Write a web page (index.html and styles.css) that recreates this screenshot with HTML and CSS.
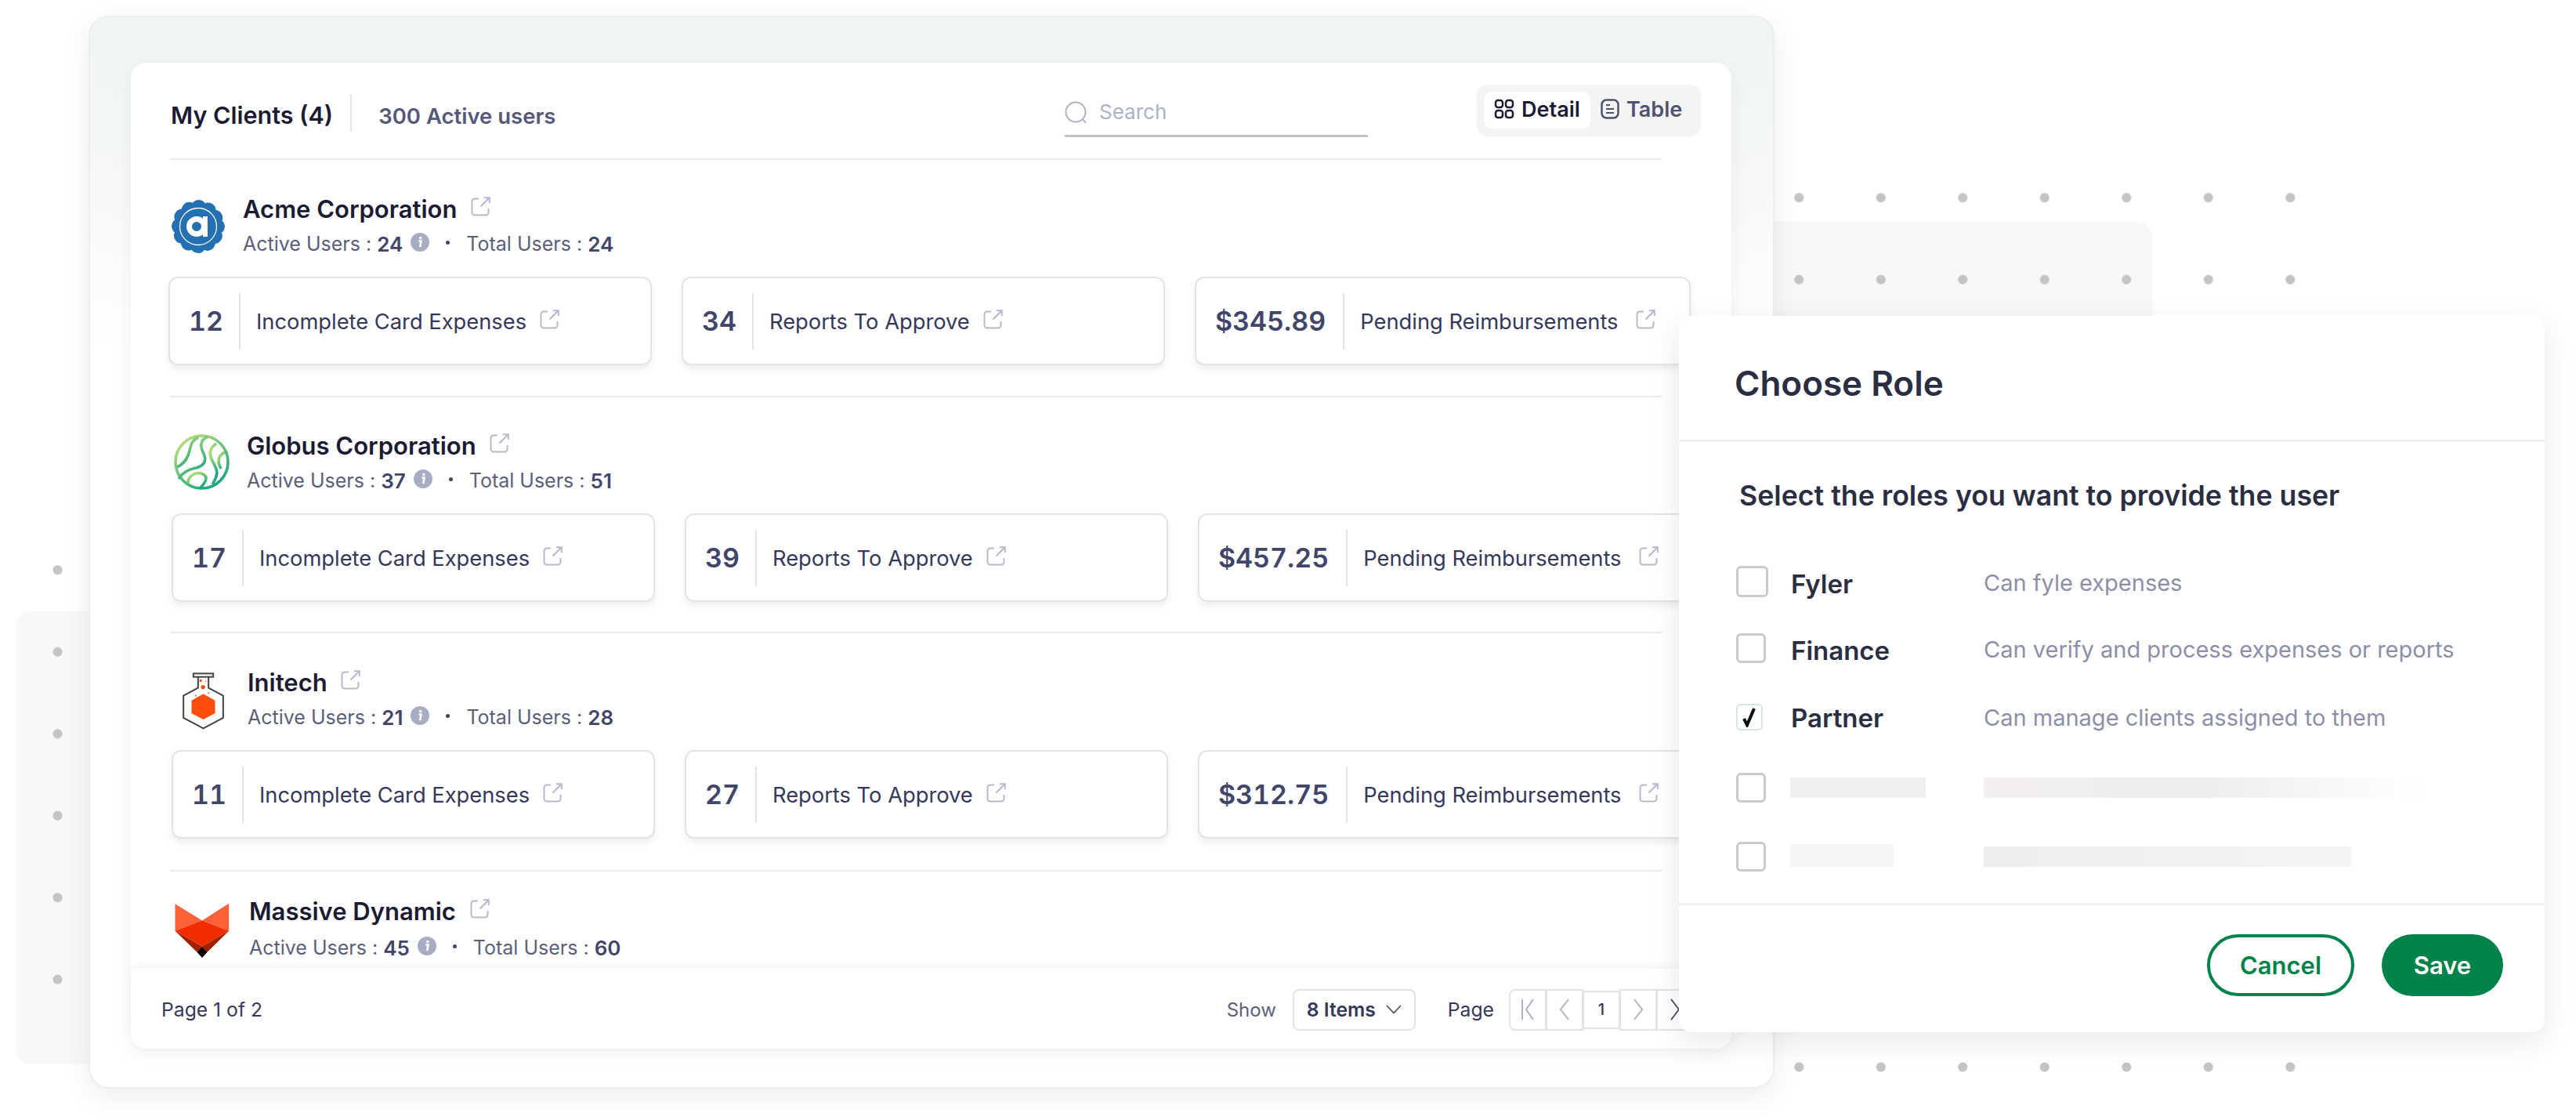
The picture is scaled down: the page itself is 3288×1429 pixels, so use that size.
FILE: index.html
```html
<!DOCTYPE html>
<html lang="en">
<head>
    <meta charset="UTF-8">
    <title>My Clients</title>
    <link rel="stylesheet" href="styles.css">
</head>
<body>
    <svg class="defs" width="0" height="0">
        <symbol id="ext" viewBox="0 0 25 25">
            <path d="M10 2.500H5A3.500 3.500 0 0 0 1.500 6v14A3.500 3.500 0 0 0 5 23.500h14a3.500 3.500 0 0 0 3.500-3.500v-5" fill="none" stroke="#b6b9cd" stroke-width="2"/>
            <path d="M12.500 12.500 23.500 1.500M17 1.200h6.800V8" fill="none" stroke="#b6b9cd" stroke-width="2"/>
        </symbol>
        <symbol id="info" viewBox="0 0 24 24">
            <circle cx="12" cy="12" r="12" fill="#a9adc3"/>
            <circle cx="12.800" cy="6.500" r="1.800" fill="#fff"/>
            <path d="M10.500 10.500h3l-1.300 7.500" fill="none" stroke="#fff" stroke-width="2.600"/>
        </symbol>
        <linearGradient id="globe" x1="0.150" y1="0" x2="0.800" y2="1">
            <stop offset="0" stop-color="#bfdf78"/>
            <stop offset="1" stop-color="#0fa280"/>
        </linearGradient>
    </svg>

    <div class="page">
        <div class="block block-left"></div>
        <div class="block block-right"></div>
        <div class="dots dots-left"></div>
        <div class="dots dots-right"></div>
        <div class="dots dots-bottom"></div>

        <div class="panel">
            <div class="card">
                <div class="card-head">
                    <span class="title">My Clients (4)</span>
                    <span class="subtitle">300 Active users</span>
                    <div class="search">
                        <svg width="30" height="30" viewBox="0 0 30 30"><circle cx="14" cy="14" r="12.500" fill="none" stroke="#aeb1c6" stroke-width="2"/><path d="M23 23l4 5" stroke="#aeb1c6" stroke-width="2"/></svg>
                        <span class="search-text">Search</span>
                    </div>
                    <div class="toggle">
                        <div class="toggle-item active">
                            <svg width="26" height="26" viewBox="0 0 26 26" fill="none" stroke="#1b1b33" stroke-width="2.500"><rect x="2" y="2" width="9" height="9" rx="3"/><rect x="15" y="2" width="9" height="9" rx="3"/><rect x="2" y="15" width="9" height="9" rx="3"/><rect x="15" y="15" width="9" height="9" rx="3"/></svg>
                            <span>Detail</span>
                        </div>
                        <div class="toggle-item">
                            <svg width="24" height="26" viewBox="0 0 24 26" fill="none" stroke="#4f5270" stroke-width="2.500"><rect x="1.500" y="1.500" width="21" height="23" rx="6"/><path d="M7 8h5M7 13h10M7 18h10" stroke-width="2"/></svg>
                            <span>Table</span>
                        </div>
                    </div>
                </div>
                <hr class="rule">

                <div class="list">
                    <div class="client client-acme">
                        <div class="client-head">
                            <div class="logo logo-acme">
                                <svg width="68" height="68" viewBox="0 0 68 68">
                                    <circle cx="34" cy="34" r="24" fill="none" stroke="#2470b3" stroke-width="20" stroke-linecap="round" stroke-dasharray="0.010 12.556"/>
                                    <circle cx="34" cy="34" r="25" fill="#2470b3"/>
                                    <circle cx="34" cy="34" r="23.500" fill="none" stroke="#fff" stroke-width="1.300"/>
                                    <circle cx="32" cy="34" r="9.500" fill="none" stroke="#fff" stroke-width="7"/>
                                    <rect x="40" y="21" width="6" height="26" fill="#fff"/>
                                </svg>
                            </div>
                            <div class="client-text">
                                <div class="client-name">Acme Corporation <svg class="ext ext-name"><use href="#ext"/></svg></div>
                                <div class="client-meta">Active Users : <b>24</b> <svg class="info"><use href="#info"/></svg><i class="sep"></i>Total Users : <b>24</b></div>
                            </div>
                        </div>
                        <div class="tiles">
                            <div class="tile"><div class="tile-num">12</div><span class="tile-label">Incomplete Card Expenses</span><svg class="ext"><use href="#ext"/></svg></div>
                            <div class="tile"><div class="tile-num">34</div><span class="tile-label">Reports To Approve</span><svg class="ext"><use href="#ext"/></svg></div>
                            <div class="tile tile-wide"><div class="tile-num">$345.89</div><span class="tile-label">Pending Reimbursements</span><svg class="ext"><use href="#ext"/></svg></div>
                        </div>
                    </div>
                    <hr class="rule">

                    <div class="client client-globus">
                        <div class="client-head">
                            <div class="logo logo-globus">
                                <svg width="71" height="71" viewBox="0 0 71 71" fill="none" stroke="url(#globe)" stroke-width="3.600">
                                    <g>
                                        <circle cx="35.500" cy="35.500" r="33.500"/>
                                        <path d="M31 4C20 9 22 17 18 27 15 35 10 39 4 42"/>
                                        <path d="M43 3C32 8 34 17 38 25 43 36 36 41 28 43 17 45 10 50 6 57"/>
                                        <path d="M54 12C43 19 46 29 50 36 55 45 58 50 49 64"/>
                                        <path d="M65 23C56 27 55 35 60 44"/>
                                        <path d="M18 63C17 54 27 48 35 50 44 53 42 60 34 68"/>
                                    </g>
                                </svg>
                            </div>
                            <div class="client-text">
                                <div class="client-name">Globus Corporation <svg class="ext ext-name"><use href="#ext"/></svg></div>
                                <div class="client-meta">Active Users : <b>37</b> <svg class="info"><use href="#info"/></svg><i class="sep"></i>Total Users : <b>51</b></div>
                            </div>
                        </div>
                        <div class="tiles">
                            <div class="tile"><div class="tile-num">17</div><span class="tile-label">Incomplete Card Expenses</span><svg class="ext"><use href="#ext"/></svg></div>
                            <div class="tile"><div class="tile-num">39</div><span class="tile-label">Reports To Approve</span><svg class="ext"><use href="#ext"/></svg></div>
                            <div class="tile tile-wide"><div class="tile-num">$457.25</div><span class="tile-label">Pending Reimbursements</span><svg class="ext"><use href="#ext"/></svg></div>
                        </div>
                    </div>
                    <hr class="rule">

                    <div class="client client-initech">
                        <div class="client-head">
                            <div class="logo logo-initech">
                                <svg width="55" height="74" viewBox="90 78 164 222">
                                    <path d="M152 99v41L96 170v85l76 40 76-40v-85l-56-30V99" fill="none" stroke="#444" stroke-width="6"/>
                                    <rect x="134" y="85" width="76" height="13" fill="#fff" stroke="#444" stroke-width="6"/>
                                    <path d="M172 163l45 25v49l-45 24-45-24v-49z" fill="#ff4d0d"/>
                                    <g fill="#ff4d0d"><circle cx="162" cy="112" r="5"/><circle cx="181" cy="115" r="2.500"/><circle cx="171" cy="137" r="8"/><circle cx="143" cy="170" r="3"/><circle cx="192" cy="160" r="3"/></g>
                                </svg>
                            </div>
                            <div class="client-text">
                                <div class="client-name">Initech <svg class="ext ext-name"><use href="#ext"/></svg></div>
                                <div class="client-meta">Active Users : <b>21</b> <svg class="info"><use href="#info"/></svg><i class="sep"></i>Total Users : <b>28</b></div>
                            </div>
                        </div>
                        <div class="tiles">
                            <div class="tile"><div class="tile-num">11</div><span class="tile-label">Incomplete Card Expenses</span><svg class="ext"><use href="#ext"/></svg></div>
                            <div class="tile"><div class="tile-num">27</div><span class="tile-label">Reports To Approve</span><svg class="ext"><use href="#ext"/></svg></div>
                            <div class="tile tile-wide"><div class="tile-num">$312.75</div><span class="tile-label">Pending Reimbursements</span><svg class="ext"><use href="#ext"/></svg></div>
                        </div>
                    </div>
                    <hr class="rule">

                    <div class="client client-massive">
                        <div class="client-head">
                            <div class="logo logo-massive">
                                <svg width="70" height="71" viewBox="70 64 210 214">
                                    <path d="M71 68l104 64-104 40zM278 66l-103 66 103 40z" fill="#ff6038"/>
                                    <path d="M71 172l104-40 103 40-103 60z" fill="#f12c00"/>
                                    <path d="M71 172l104 60-20 21zM278 172l-103 60 20 21z" fill="#a12000"/>
                                    <path d="M175 232l20 21-20 22-20-22z" fill="#000"/>
                                </svg>
                            </div>
                            <div class="client-text">
                                <div class="client-name">Massive Dynamic <svg class="ext ext-name"><use href="#ext"/></svg></div>
                                <div class="client-meta">Active Users : <b>45</b> <svg class="info"><use href="#info"/></svg><i class="sep"></i>Total Users : <b>60</b></div>
                            </div>
                        </div>
                    </div>
                </div>

                <div class="card-foot">
                    <span class="page-count">Page 1 of 2</span>
                    <div class="foot-right">
                        <span class="show">Show</span>
                        <div class="select">
                            <span>8 Items</span>
                            <svg width="20" height="12" viewBox="0 0 20 12" fill="none" stroke="#4f5270" stroke-width="1.800"><path d="M1 1l9 9.500L19 1"/></svg>
                        </div>
                        <span class="page-word">Page</span>
                        <div class="pager">
                            <div class="pager-btn"><svg width="18" height="28" viewBox="0 0 18 28" fill="none" stroke="#aeb1c6" stroke-width="2"><path d="M2 1v26M16 1L7 14l9 13"/></svg></div>
                            <div class="pager-btn"><svg width="14" height="28" viewBox="0 0 14 28" fill="none" stroke="#aeb1c6" stroke-width="2"><path d="M12 1L2 14l10 13"/></svg></div>
                            <div class="pager-btn pager-current">1</div>
                            <div class="pager-btn"><svg width="14" height="28" viewBox="0 0 14 28" fill="none" stroke="#aeb1c6" stroke-width="2"><path d="M2 1l10 13L2 27"/></svg></div>
                            <div class="pager-btn"><svg width="14" height="28" viewBox="0 0 14 28" fill="none" stroke="#4f5270" stroke-width="2"><path d="M2 1l10 13L2 27"/></svg></div>
                        </div>
                    </div>
                </div>
            </div>
        </div>

        <div class="modal">
            <div class="modal-head">Choose Role</div>
            <div class="modal-body">
                <div class="modal-lead">Select the roles you want to provide the user</div>
                <div class="roles">
                    <div class="check check-lg"></div><span class="role-name">Fyler</span><span class="role-desc">Can fyle expenses</span>
                    <div class="check"></div><span class="role-name">Finance</span><span class="role-desc">Can verify and process expenses or reports</span>
                    <div class="check check-on">
                        <svg width="20" height="26" viewBox="0 0 20 26" fill="none" stroke="#111" stroke-width="4"><path d="M3 15l4 8L16 2"/></svg>
                    </div><span class="role-name role-name-up">Partner</span><span class="role-desc">Can manage clients assigned to them</span>
                    <div class="check"></div><div class="skel skel-name-a"></div><div class="skel skel-desc-a"></div>
                    <div class="check"></div><div class="skel skel-name-b"></div><div class="skel skel-desc-b"></div>
                </div>
            </div>
            <div class="modal-foot">
                <div class="btn btn-outline">Cancel</div>
                <div class="btn btn-solid">Save</div>
            </div>
        </div>
    </div>
</body>
</html>
```

FILE: styles.css
```css
* {
    box-sizing: border-box;
}
body {
    margin: 0;
    background: #fff;
    font-family: Inter, "Noto Sans", sans-serif;
    color: #35385a;
}
.defs {
    position: absolute;
}
.page {
    position: relative;
    width: 3288px;
    height: 1429px;
    padding: 20px 0 0 113px;
    overflow: hidden;
}

/* background decoration */
.block {
    position: absolute;
    background: #f7f8fa;
    border-radius: 20px;
}
.block-left {
    left: 20px;
    top: 780px;
    width: 200px;
    height: 578px;
}
.block-right {
    left: 2200px;
    top: 283px;
    width: 547px;
    height: 300px;
}
.dots {
    position: absolute;
    background-image: radial-gradient(circle, #c4c4c4 5.5px, transparent 6.5px);
    background-size: 104.5px 104.5px;
}
.dots-left {
    left: 21px;
    top: 675px;
    width: 104.5px;
    height: 627px;
}
.dots-right {
    left: 2244px;
    top: 200px;
    width: 731.5px;
    height: 209px;
}
.dots-bottom {
    left: 2244px;
    top: 1309px;
    width: 731.5px;
    height: 104.5px;
}

/* main panel */
.panel {
    position: relative;
    width: 2152px;
    height: 1369px;
    padding: 58px 52px 0;
    background: linear-gradient(#f1f4f5 0, #f5f7f8 180px, #fff 420px);
    border: 2px solid #eeeeee;
    border-radius: 26px;
    box-shadow: 0 10px 36px rgba(0, 0, 0, 0.07);
}
.card {
    display: flex;
    flex-direction: column;
    width: 2043px;
    height: 1258px;
    background: #fff;
    border-radius: 20px;
    box-shadow: 0 6px 24px rgba(0, 0, 0, 0.06);
}
.card-head {
    display: flex;
    align-items: flex-start;
    height: 122px;
    padding: 0 39px 0 51px;
}
.title {
    display: flex;
    align-items: center;
    height: 47px;
    margin-top: 40px;
    padding: 5px 22px 0 0;
    border-right: 2px solid #e6e6e8;
    font-size: 30.5px;
    font-weight: 600;
    color: #1b1b33;
}
.subtitle {
    margin: 51px 0 0 34px;
    font-size: 27.5px;
    font-weight: 600;
    color: #55587a;
}
.search {
    display: flex;
    align-items: center;
    gap: 14px;
    width: 387px;
    height: 50px;
    margin: 45px 0 0 auto;
    padding-bottom: 9px;
    border-bottom: 3px solid #c2c2c2;
    font-size: 26px;
    color: #aeb1c6;
}
.search-text {
    margin-top: -4px;
}
.toggle {
    display: flex;
    align-items: flex-start;
    width: 286px;
    height: 66px;
    margin: 28px 0 0 139px;
    padding: 9px;
    background: #f4f4f5;
    border-radius: 14px;
    font-size: 27px;
    font-weight: 600;
}
.toggle-item {
    display: flex;
    align-items: center;
    gap: 9px;
    height: 47px;
    padding: 0 13px 3px;
    color: #4f5270;
    border-radius: 10px;
}
.toggle-item.active {
    width: 136px;
    background: #fff;
    color: #1b1b33;
}
.rule {
    flex: none;
    height: 2px;
    margin: 0 89px 0 50px;
    border: 0;
    background: #ececee;
}

/* client rows */
.list {
    flex: 1;
    overflow: hidden;
}
.client {
    margin-left: 52px;
    padding: 43px 0 38px;
}
.client-acme {
    margin-left: 48px;
    padding: 44px 0 39px;
}
.client-initech {
    padding: 44px 0 40px;
}
.client-massive {
    padding: 32px 0 0;
}
.client-head {
    display: flex;
    height: 90px;
    margin-bottom: 15px;
}
.logo {
    flex: none;
    display: flex;
    align-items: flex-start;
}
.logo-acme {
    width: 95px;
    padding: 7px 0 0 4px;
}
.logo-globus {
    width: 96px;
    padding: 4px 0 0 3px;
}
.logo-initech {
    width: 97px;
    padding: 5px 0 0 13px;
}
.logo-massive {
    width: 99px;
    padding: 8px 0 0 4px;
}
.client-name {
    display: flex;
    align-items: center;
    height: 36px;
    font-size: 31px;
    font-weight: 600;
    color: #1b1b33;
    white-space: pre;
}
.client-meta {
    display: flex;
    align-items: center;
    height: 36px;
    margin-top: 9px;
    font-size: 25px;
    color: #5c5f7a;
    white-space: pre;
}
.client-massive .client-meta {
    margin-top: 11px;
}
.client-meta b {
    font-weight: 600;
    font-size: 26px;
    color: #41456a;
}
.ext {
    flex: none;
    width: 25px;
    height: 25px;
    margin-left: 17px;
    margin-top: -4px;
}
.ext-name {
    margin-left: 10px;
    margin-top: -6px;
}
.tile-wide .ext {
    margin-left: 22px;
}
.info {
    width: 24px;
    height: 24px;
    margin: -4px 0 0 10px;
}
.sep {
    width: 5px;
    height: 5px;
    margin: -4px 21px 0 21px;
    border-radius: 50%;
    background: #41456a;
}
.tiles {
    display: flex;
    gap: 38px;
}
.tile {
    display: flex;
    align-items: center;
    flex: none;
    width: 617px;
    height: 113px;
    background: #fff;
    border: 2px solid #e4e4e6;
    border-radius: 12px;
    box-shadow: 0 5px 9px rgba(0, 0, 0, 0.07);
}
.tile-wide {
    width: 633px;
}
.tile-num {
    display: flex;
    align-items: center;
    height: 72px;
    padding: 0 20px 0 24px;
    border-right: 2px solid #e4e4e6;
    font-size: 34px;
    font-weight: 600;
    color: #41456a;
    font-feature-settings: "tnum";
}
.tile-wide .tile-num {
    padding-right: 22px;
}
.tile-label {
    margin-left: 20px;
    padding-top: 2px;
    font-size: 27.3px;
    color: #35385a;
}

/* card footer */
.card-foot {
    display: flex;
    align-items: center;
    flex: none;
    height: 102px;
    padding: 2px 48px 0 39px;
    position: relative;
    background: #fff;
    border-radius: 0 0 20px 20px;
    box-shadow: 0 -4px 12px rgba(0, 0, 0, 0.04);
    font-size: 24.7px;
}
.foot-right {
    display: flex;
    align-items: center;
    margin-left: auto;
}
.show {
    font-size: 24px;
    color: #5c5f7a;
}
.select {
    display: flex;
    align-items: center;
    justify-content: space-between;
    width: 157px;
    height: 53px;
    margin: 0 41px 0 21px;
    padding: 0 16px;
    border: 2px solid #e4e4e6;
    border-radius: 8px;
    font-weight: 600;
}
.page-word {
    margin-right: 20px;
}
.pager {
    display: flex;
    align-items: center;
}
.pager-btn {
    display: flex;
    align-items: center;
    justify-content: center;
    width: 48px;
    height: 53px;
    margin-left: -1px;
    border: 2px solid #e4e4e6;
    font-size: 20px;
    font-weight: 500;
}
.pager-btn:first-child {
    border-radius: 8px 0 0 8px;
}
.pager-current {
    height: 49px;
}

/* role dialog */
.modal {
    position: absolute;
    left: 2143px;
    top: 403px;
    display: flex;
    flex-direction: column;
    width: 1105px;
    height: 914px;
    background: #fff;
    border-radius: 16px;
    box-shadow: 0 12px 40px rgba(0, 0, 0, 0.09);
}
.modal-head {
    display: flex;
    align-items: center;
    flex: none;
    height: 161px;
    padding: 14px 0 0 71px;
    border-bottom: 3px solid #f0f0f0;
    font-size: 44px;
    font-weight: 600;
    color: #2b2e42;
}
.modal-body {
    flex: 1;
    padding: 0 0 0 73px;
}
.modal-lead {
    display: flex;
    align-items: center;
    height: 135px;
    padding-left: 4px;
    font-size: 35.7px;
    font-weight: 600;
    color: #2b2e42;
}
.roles {
    display: grid;
    grid-template-columns: 71px 245px 1fr;
    grid-template-rows: 86px 84px 91px 90px 86px;
    align-items: center;
}
.check {
    display: flex;
    align-items: center;
    justify-content: center;
    width: 38px;
    height: 38px;
    border: 3px solid #cdc9cb;
    border-radius: 6px;
}
.check-lg {
    width: 41px;
    height: 40px;
}
.check-on {
    width: 34px;
    height: 34px;
    border: 2px solid #d8e6ea;
}
.role-name {
    margin-left: -1px;
    padding-top: 5px;
    font-size: 33px;
    font-weight: 600;
    color: #2b2e42;
}
.role-name-up {
    padding-top: 2px;
}
.role-desc {
    padding-top: 2px;
    font-size: 29px;
    color: #8d8fa8;
}
.skel {
    background: #efefef;
}
.skel-name-a {
    width: 173px;
    height: 26px;
    margin-left: -2px;
}
.skel-desc-a {
    width: 560px;
    height: 26px;
    background: linear-gradient(90deg, #f2efee, #eeeeee 50%, #fff);
}
.skel-name-b {
    width: 132px;
    height: 29px;
    margin: -4px 0 0 -2px;
    background: #f5f5f5;
}
.skel-desc-b {
    width: 469px;
    height: 26px;
    background: linear-gradient(90deg, #eeeeee, #f5f5f5);
}
.modal-foot {
    display: flex;
    justify-content: flex-end;
    align-items: flex-start;
    gap: 35px;
    flex: none;
    height: 165px;
    padding: 37px 53px 0 0;
    border-top: 3px solid #f0f0f0;
}
.btn {
    display: flex;
    align-items: center;
    justify-content: center;
    height: 79px;
    border-radius: 40px;
    font-size: 31px;
    font-weight: 600;
}
.btn-outline {
    width: 188px;
    border: 4px solid #00834a;
    color: #00834a;
}
.btn-solid {
    width: 155px;
    background: #00834a;
    color: #fff;
}
```
